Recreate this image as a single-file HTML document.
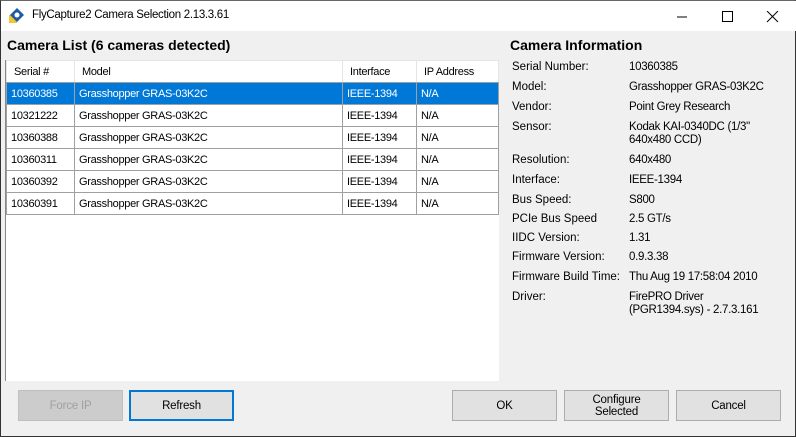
<!DOCTYPE html><html><head><style>
*{margin:0;padding:0;box-sizing:border-box}
body{width:796px;height:437px;background:#f0f0f0;font-family:"Liberation Sans",sans-serif;font-size:12px;color:#000;position:relative;overflow:hidden;border:1px solid #333;border-top:1px solid #666}
.a{position:absolute;white-space:nowrap}
#tb{left:0;top:0;width:796px;height:30px;background:#fff}
.h{font-weight:bold;font-size:14px}
#list{left:4px;top:59px;width:494px;height:321px;background:#fff;border-left:1px solid #828790}
table{border-collapse:collapse;position:absolute;left:0;top:0;width:493px}
td{height:22px;border:1px solid #a0a0a0;padding:0 4px;font-size:11px;letter-spacing:-0.3px}
tr.hd td{border-color:#e5e5e5 #e5e5e5 #a0a0a0;padding-left:7px}
tr.sel td{background:#0078d7;color:#fff}
.btn{position:absolute;top:389px;width:105px;height:31px;background:#e1e1e1;border:1px solid #adadad;text-align:center;font-size:11.5px;letter-spacing:-0.2px;display:flex;align-items:center;justify-content:center;line-height:12px}
.l{left:511px;font-size:11.5px}.v{left:628px;font-size:11.5px;letter-spacing:-0.3px;padding-top:1px}
</style></head><body>
<div class="a" id="tb"></div>
<svg class="a" style="left:8px;top:6px" width="16" height="16"><rect x="0" y="8" width="8" height="8" fill="#f4c430"/><polygon points="8,1 15,8 8,15 1,8" fill="#1e5aa8"/><circle cx="8" cy="8" r="2.5" fill="#fff"/></svg>
<div class="a" style="left:31px;top:8px;font-size:11.5px;letter-spacing:-0.3px">FlyCapture2 Camera Selection 2.13.3.61</div>
<svg class="a" style="left:676px;top:10px" width="110" height="12"><line x1="0" y1="6" x2="10" y2="6" stroke="#000"/><rect x="45.5" y="0.5" width="10" height="10" fill="none" stroke="#000"/><path d="M90 0L101 11M101 0L90 11" stroke="#000"/></svg>
<div class="a h" style="left:6px;top:36px">Camera List (6 cameras detected)</div>
<div class="a h" style="left:509px;top:36px">Camera Information</div>
<div class="a" id="list"><table>
<colgroup><col style="width:68px"><col style="width:268px"><col style="width:74px"><col></colgroup>
<tr class="hd"><td>Serial #</td><td>Model</td><td>Interface</td><td>IP Address</td></tr>
<tr class="sel"><td>10360385</td><td>Grasshopper GRAS-03K2C</td><td>IEEE-1394</td><td>N/A</td></tr>
<tr><td>10321222</td><td>Grasshopper GRAS-03K2C</td><td>IEEE-1394</td><td>N/A</td></tr>
<tr><td>10360388</td><td>Grasshopper GRAS-03K2C</td><td>IEEE-1394</td><td>N/A</td></tr>
<tr><td>10360311</td><td>Grasshopper GRAS-03K2C</td><td>IEEE-1394</td><td>N/A</td></tr>
<tr><td>10360392</td><td>Grasshopper GRAS-03K2C</td><td>IEEE-1394</td><td>N/A</td></tr>
<tr><td>10360391</td><td>Grasshopper GRAS-03K2C</td><td>IEEE-1394</td><td>N/A</td></tr>
</table></div>
<div class="a l" style="top:60px">Serial Number:</div><div class="a v" style="top:59px">10360385</div>
<div class="a l" style="top:80px">Model:</div><div class="a v" style="top:79px">Grasshopper GRAS-03K2C</div>
<div class="a l" style="top:100px">Vendor:</div><div class="a v" style="top:99px">Point Grey Research</div>
<div class="a l" style="top:120px">Sensor:</div><div class="a v" style="top:119px;line-height:13px">Kodak KAI-0340DC (1/3"<br>640x480 CCD)</div>
<div class="a l" style="top:153px">Resolution:</div><div class="a v" style="top:152px">640x480</div>
<div class="a l" style="top:173px">Interface:</div><div class="a v" style="top:172px">IEEE-1394</div>
<div class="a l" style="top:193px">Bus Speed:</div><div class="a v" style="top:192px">S800</div>
<div class="a l" style="top:212px">PCIe Bus Speed</div><div class="a v" style="top:211px">2.5 GT/s</div>
<div class="a l" style="top:231px">IIDC Version:</div><div class="a v" style="top:230px">1.31</div>
<div class="a l" style="top:250px">Firmware Version:</div><div class="a v" style="top:249px">0.9.3.38</div>
<div class="a l" style="top:270px">Firmware Build Time:</div><div class="a v" style="top:269px">Thu Aug 19 17:58:04 2010</div>
<div class="a l" style="top:290px">Driver:</div><div class="a v" style="top:289px;line-height:13px">FirePRO Driver<br>(PGR1394.sys) - 2.7.3.161</div>
<div class="btn" style="left:17px;background:#ccc;border-color:#bfbfbf;color:#a0a0a0">Force IP</div>
<div class="btn" style="left:128px;border:2px solid #0078d7">Refresh</div>
<div class="btn" style="left:451px">OK</div>
<div class="btn" style="left:563px">Configure<br>Selected</div>
<div class="btn" style="left:675px">Cancel</div>
</body></html>
